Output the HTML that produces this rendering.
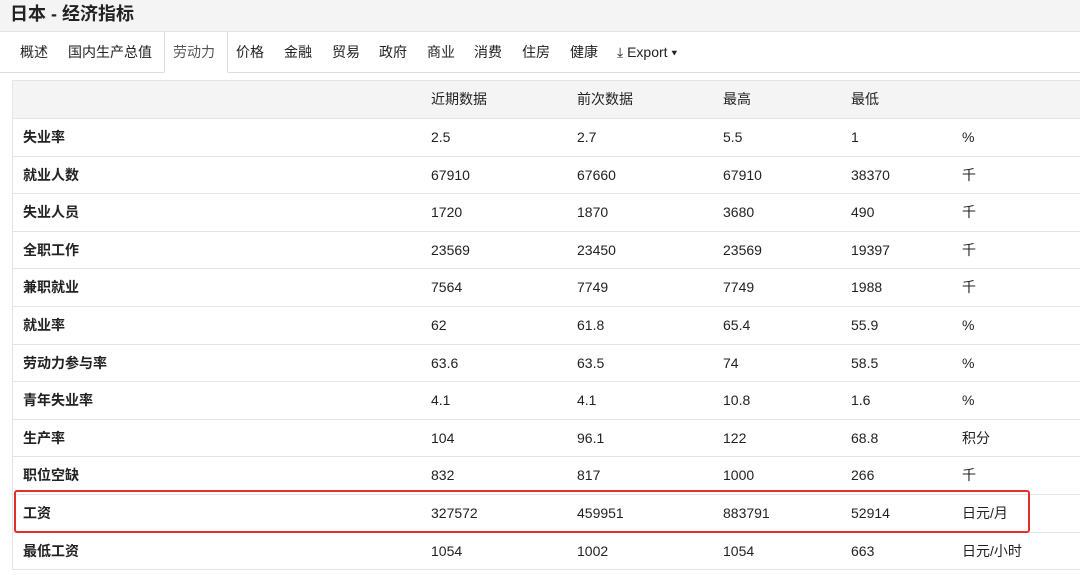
<!DOCTYPE html><html><head><meta charset="utf-8"><style>
body{margin:0;width:1080px;height:575px;overflow:hidden;background:#fff;font-family:"Liberation Sans","Noto Sans CJK SC",sans-serif;color:#222;position:relative}
.title{position:absolute;left:0;top:0;width:1080px;height:32px;background:#f4f4f4;border-bottom:1px solid #e2e2e2;box-sizing:border-box}
.title span{position:absolute;left:10px;top:0;line-height:28px;font-size:18px;font-weight:bold;color:#222}
.tabs{position:absolute;left:0;top:32px;width:1080px;height:41px;border-bottom:1px solid #ddd;box-sizing:border-box;background:#fff}
.tab{position:absolute;top:0;line-height:40px;font-size:14px;color:#222}
.active{position:absolute;left:164px;top:0;width:64px;height:41px;border:1px solid #ddd;border-top:none;border-bottom:1px solid #fff;background:#fff;box-sizing:border-box}
.tbl{position:absolute;left:12px;top:80px;width:1068px;border-left:1px solid #e4e4e4;border-top:1px solid #e4e4e4}
.row{position:relative;height:37.6px;border-bottom:1px solid #e4e4e4;box-sizing:border-box;font-size:14px}
.row.h{background:#f4f4f4;height:38px}
.row span{position:absolute;top:0;line-height:36px;height:36px}
.row span:first-child{font-weight:bold}
.row.h span:first-child{font-weight:normal}
.box{position:absolute;left:14px;top:490px;width:1016px;height:43px;border:2px solid #e0302a;border-radius:3px;box-sizing:border-box}
</style></head><body>
<div class="title"><span>日本 - 经济指标</span></div>
<div class="tabs">
<div class="active"></div>
<span class="tab" style="left:20px">概述</span>
<span class="tab" style="left:68px">国内生产总值</span>
<span class="tab" style="left:173px;color:#555">劳动力</span>
<span class="tab" style="left:236px">价格</span>
<span class="tab" style="left:284px">金融</span>
<span class="tab" style="left:332px">贸易</span>
<span class="tab" style="left:379px">政府</span>
<span class="tab" style="left:427px">商业</span>
<span class="tab" style="left:474px">消费</span>
<span class="tab" style="left:522px">住房</span>
<span class="tab" style="left:570px">健康</span>
<span class="tab" style="left:617px">⤓ Export ▾</span>
</div>
<div class="tbl">
<div class="row h"><span style="left:418px">近期数据</span><span style="left:564px">前次数据</span><span style="left:710px">最高</span><span style="left:838px">最低</span></div>
<div class="row"><span style="left:10px">失业率</span><span style="left:418px">2.5</span><span style="left:564px">2.7</span><span style="left:710px">5.5</span><span style="left:838px">1</span><span style="left:949px">%</span></div>
<div class="row"><span style="left:10px">就业人数</span><span style="left:418px">67910</span><span style="left:564px">67660</span><span style="left:710px">67910</span><span style="left:838px">38370</span><span style="left:949px">千</span></div>
<div class="row"><span style="left:10px">失业人员</span><span style="left:418px">1720</span><span style="left:564px">1870</span><span style="left:710px">3680</span><span style="left:838px">490</span><span style="left:949px">千</span></div>
<div class="row"><span style="left:10px">全职工作</span><span style="left:418px">23569</span><span style="left:564px">23450</span><span style="left:710px">23569</span><span style="left:838px">19397</span><span style="left:949px">千</span></div>
<div class="row"><span style="left:10px">兼职就业</span><span style="left:418px">7564</span><span style="left:564px">7749</span><span style="left:710px">7749</span><span style="left:838px">1988</span><span style="left:949px">千</span></div>
<div class="row"><span style="left:10px">就业率</span><span style="left:418px">62</span><span style="left:564px">61.8</span><span style="left:710px">65.4</span><span style="left:838px">55.9</span><span style="left:949px">%</span></div>
<div class="row"><span style="left:10px">劳动力参与率</span><span style="left:418px">63.6</span><span style="left:564px">63.5</span><span style="left:710px">74</span><span style="left:838px">58.5</span><span style="left:949px">%</span></div>
<div class="row"><span style="left:10px">青年失业率</span><span style="left:418px">4.1</span><span style="left:564px">4.1</span><span style="left:710px">10.8</span><span style="left:838px">1.6</span><span style="left:949px">%</span></div>
<div class="row"><span style="left:10px">生产率</span><span style="left:418px">104</span><span style="left:564px">96.1</span><span style="left:710px">122</span><span style="left:838px">68.8</span><span style="left:949px">积分</span></div>
<div class="row"><span style="left:10px">职位空缺</span><span style="left:418px">832</span><span style="left:564px">817</span><span style="left:710px">1000</span><span style="left:838px">266</span><span style="left:949px">千</span></div>
<div class="row"><span style="left:10px">工资</span><span style="left:418px">327572</span><span style="left:564px">459951</span><span style="left:710px">883791</span><span style="left:838px">52914</span><span style="left:949px">日元/月</span></div>
<div class="row"><span style="left:10px">最低工资</span><span style="left:418px">1054</span><span style="left:564px">1002</span><span style="left:710px">1054</span><span style="left:838px">663</span><span style="left:949px">日元/小时</span></div>
</div>
<div class="box"></div>
</body></html>
